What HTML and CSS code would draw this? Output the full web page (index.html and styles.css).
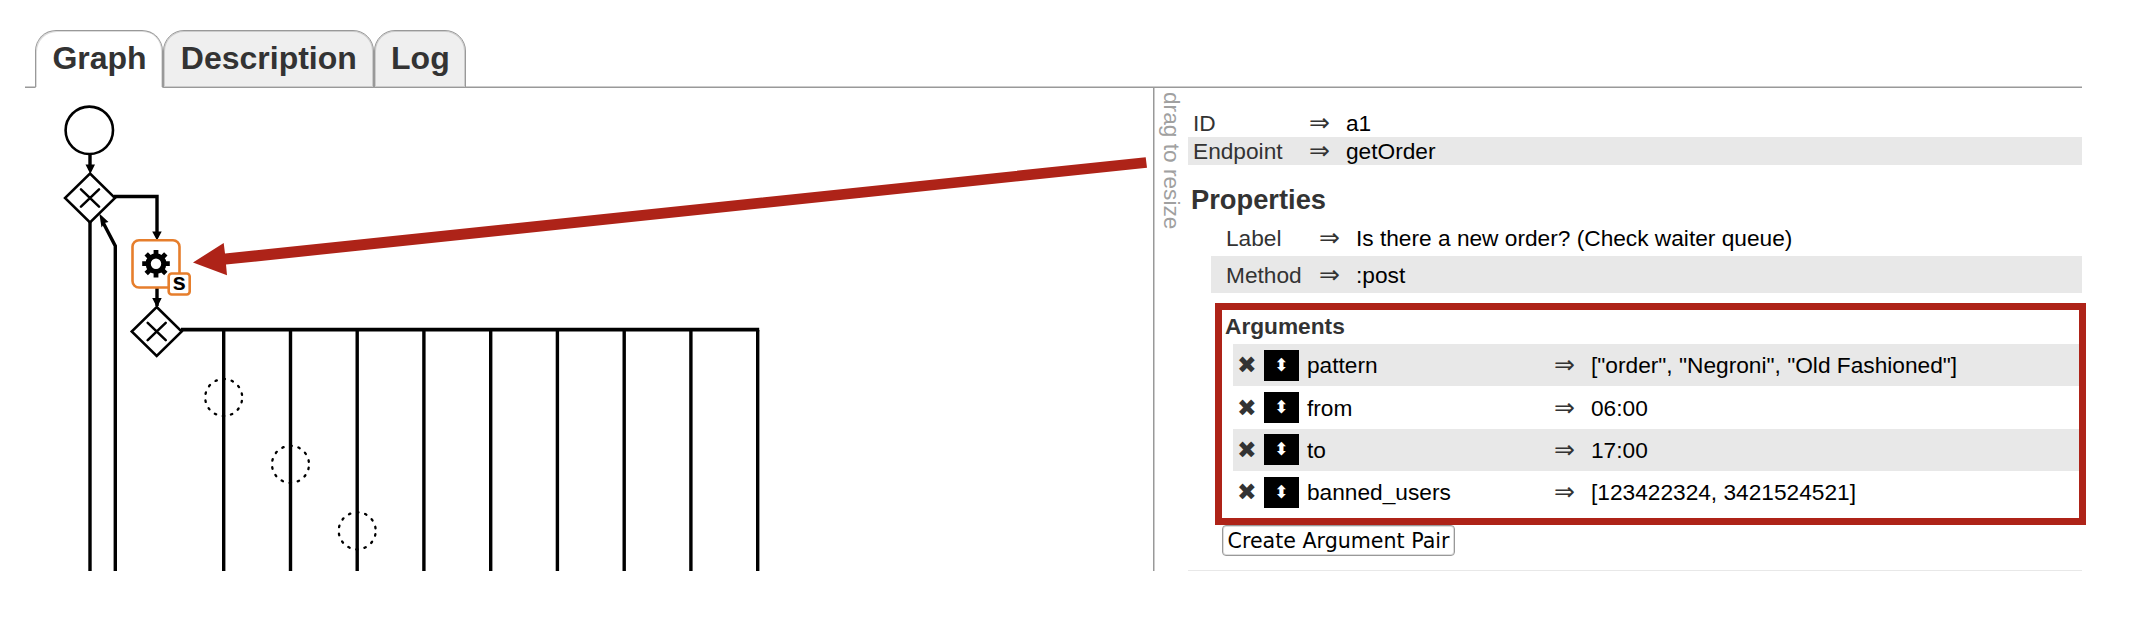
FILE: index.html
```html
<!DOCTYPE html>
<html lang="en">
<head>
<meta charset="utf-8">
<title>Process graph</title>
<link rel="stylesheet" href="styles.css">
</head>
<body>
<div class="page">
  <nav class="tabs">
    <div class="tab active">Graph</div>
    <div class="tab">Description</div>
    <div class="tab">Log</div>
  </nav>
  <main class="content">
    <svg class="graph" viewBox="25 88 1128 483" width="1128" height="483">
      <g fill="none" stroke="#000" stroke-width="3.4">
        <path d="M90 154v16M90 221v350M115.300 571V246l-13-25M114 196.500h43v36M157 288v18"/>
        <path d="M181 329.700h578.200" stroke-width="3.8"/>
        <path d="M223.700 330v241M290.500 330v241M357.200 330v241M423.900 330v241M490.700 330v241M557.400 330v241M624.200 330v241M690.900 330v241M757.700 330v241"/>
      </g>
      <circle cx="89.300" cy="130.300" r="23.700" fill="#fff" stroke="#000" stroke-width="2.600"/>
      <g fill="#fff" stroke="#000" stroke-width="2.500">
        <path d="M90 173.500l25 24.500l-25 24.500l-25-24.500z"/>
        <path d="M156.700 307l25 24.500l-25 24.500l-25-24.500z"/>
        <path d="M81 189.300l18 17.400M99 189.300l-18 17.400M147.700 322.800l18 17.400M165.700 322.800l-18 17.400" stroke-linecap="round"/>
      </g>
      <path d="M85.500 164.500h9.500L90.300 174zM152.200 231.500h9.500L157 240.500zM152.200 298h9.500L157 307.500zM99.300 213.500l9.200 8.500l-4 1l-3 4.500z"/>
      <rect x="132.500" y="240.200" width="47" height="47.300" rx="6.500" fill="#fff" stroke="#e67e2c" stroke-width="2.600"/>
      <g transform="translate(156 263.700)">
        <path stroke="#000" stroke-width="4.800" d="M0-13.800V-7M0 13.800V7M-13.800 0H-7M13.800 0H7M-9.800-9.800L-5-5M9.800 9.800L5 5M-9.800 9.800L-5 5M9.800-9.800L5-5"/>
        <circle r="7.800" fill="#fff" stroke="#000" stroke-width="5.200"/>
      </g>
      <rect x="168.700" y="273.500" width="21" height="21" rx="3" fill="#fff" stroke="#e67e2c" stroke-width="2.600"/>
      <text class="badge" x="179.200" y="290.300" text-anchor="middle">s</text>
      <g fill="none" stroke="#000" stroke-width="2.300" stroke-dasharray="1.500 6.803" stroke-dashoffset="4.900" stroke-linecap="round">
        <circle cx="223.700" cy="397.500" r="18.500"/>
        <circle cx="290.500" cy="464.300" r="18.500"/>
        <circle cx="357.200" cy="530.800" r="18.500"/>
      </g>
      <path fill="#ae2318" d="M193 262.500L223.700 243L225 253.600L1145.700 157.300L1147 167.700L226 264.600L227 275.300z"/>
    </svg>
    <div class="resizer"><span>drag to resize</span></div>
    <section class="details">
      <div class="row"><span class="key">ID</span><span class="arrow">⇒</span><span class="value">a1</span></div>
      <div class="row shaded"><span class="key">Endpoint</span><span class="arrow">⇒</span><span class="value">getOrder</span></div>
      <h2>Properties</h2>
      <div class="properties">
        <div class="prop"><span class="key">Label</span><span class="arrow">⇒</span><span class="value">Is there a new order? (Check waiter queue)</span></div>
        <div class="prop shaded"><span class="key">Method</span><span class="arrow">⇒</span><span class="value">:post</span></div>
      </div>
      <div class="arguments">
        <h3>Arguments</h3>
        <div class="arg shaded"><span class="remove">✖</span><span class="move">⬍</span><span class="name">pattern</span><span class="arrow">⇒</span><span class="value">["order", "Negroni", "Old Fashioned"]</span></div>
        <div class="arg"><span class="remove">✖</span><span class="move">⬍</span><span class="name">from</span><span class="arrow">⇒</span><span class="value">06:00</span></div>
        <div class="arg shaded"><span class="remove">✖</span><span class="move">⬍</span><span class="name">to</span><span class="arrow">⇒</span><span class="value">17:00</span></div>
        <div class="arg"><span class="remove">✖</span><span class="move">⬍</span><span class="name">banned_users</span><span class="arrow">⇒</span><span class="value">[123422324, 3421524521]</span></div>
      </div>
      <button class="create">Create Argument Pair</button>
    </section>
  </main>
</div>
</body>
</html>
```
FILE: styles.css
```css
* { box-sizing: border-box; }
body {
  margin: 0;
  background: #fff;
  color: #000;
  font: 22.7px "Liberation Sans", Arial, sans-serif;
}
.page { padding: 30px 0 0 25px; width: 2136px; height: 620px; overflow: hidden; }
.tabs {
  display: flex;
  width: 2057px;
  height: 58px;
  padding-left: 10px;
  background: linear-gradient(#ccc 50%, #999 50%) 0 100% / 100% 2px no-repeat;
}
.tab {
  height: 58px;
  padding: 0 15.8px 0 16.4px;
  border: 1px solid #999;
  border-radius: 21px 21px 0 0;
  box-shadow: inset 0 0 0 1px #ccc;
  background: #efefef;
  color: #333;
  font-size: 32px;
  font-weight: bold;
  line-height: 55px;
}
.tab.active {
  background: #fff;
  border-bottom-color: #fff;
  box-shadow: inset 1px 1px 0 #ddd, inset -1px 0 0 #ddd;
}
.content { display: flex; width: 2063px; height: 483px; }
.graph { display: block; flex: none; }
.badge { font: bold 24px "Liberation Sans", Arial, sans-serif; }
.resizer {
  flex: none;
  width: 35px;
  border-left: 1px solid #999;
  box-shadow: inset 1px 0 0 #ccc;
  color: #a0a0a0;
}
.resizer span {
  display: block;
  margin: 4px 0 0 5px;
  writing-mode: vertical-rl;
  line-height: 26px;
}
.details { width: 894px; flex: none; padding-top: 21px; border-bottom: 1px solid #e8e8e8; }
.shaded { background: #e8e8e8; }
.row, .prop, .arg { display: flex; }
.key { color: #333; }
.arrow { color: #333; font-family: "DejaVu Sans", sans-serif; font-size: 25px; }
.row { height: 28px; line-height: 28px; padding-left: 5px; }
.row .key { width: 116px; }
.row .arrow, .prop .arrow { width: 37px; }
h2 { margin: 18px 0 0 3px; height: 36px; font-size: 27.3px; line-height: 33px; color: #333; }
.properties { margin-left: 23px; }
.prop { height: 37px; line-height: 38px; padding-left: 15px; }
.prop .key { width: 93px; }
.arguments {
  width: 871px;
  height: 222px;
  margin: 10px 0 0 27px;
  padding-left: 11px;
  border: 7px solid #ae2318;
}
h3 { margin: 0 0 0 -8px; height: 34px; font-size: 22.7px; line-height: 33px; color: #333; }
.arg { height: 42.4px; line-height: 42px; align-items: center; }
.remove { width: 31px; padding-left: 4px; color: #333; font-family: "DejaVu Sans", sans-serif; font-size: 23.5px; }
.move {
  width: 35px;
  height: 31px;
  margin-right: 8px;
  background: #000;
  color: #fff;
  font: 17.5px/31px "DejaVu Sans", sans-serif;
  text-align: center;
}
.name { width: 247px; }
.arg .arrow { width: 37px; }
.create {
  display: block;
  width: 233px;
  height: 31px;
  margin-left: 34px;
  padding: 0;
  border: 1px solid #999;
  border-radius: 4px;
  box-shadow: inset 0 0 0 1px #ddd;
  background: #fff;
  color: #000;
  font: 20.6px "DejaVu Sans", sans-serif;
  white-space: nowrap;
}
```
